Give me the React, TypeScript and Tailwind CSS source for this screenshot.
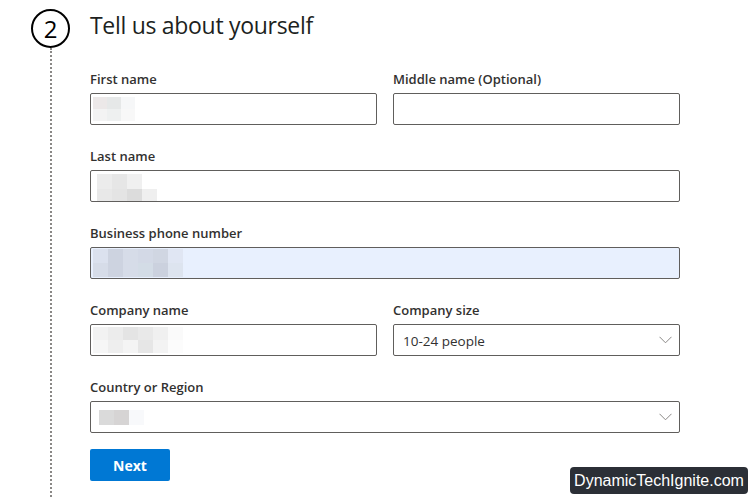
const font = { fontFamily: '"Open Sans", "Noto Sans", sans-serif' };

// pixelated blur stand-in for redacted values
const Mosaic = ({ cols, rows, cell, colors }: { cols: number; rows: number; cell: [number, number]; colors: string[] }) => (
  <div
    className="grid"
    style={{ gridTemplateColumns: `repeat(${cols}, ${cell[0]}px)`, gridTemplateRows: `repeat(${rows}, ${cell[1]}px)` }}
  >
    {colors.map((c, i) => (
      <div key={i} style={{ backgroundColor: c }} />
    ))}
  </div>
);

const Label = ({ children }: { children: React.ReactNode }) => (
  <div className="text-[13px] leading-[20px] font-semibold text-[#323130] mb-1">{children}</div>
);

const Box = ({ children, blue }: { children?: React.ReactNode; blue?: boolean }) => (
  <div
    className={`h-8 border border-[#605e5c] rounded-[2px] flex items-center overflow-hidden ${blue ? 'bg-[#e8f0fe]' : 'bg-white'}`}
  >
    {children}
  </div>
);

const Chevron = () => (
  <svg width="13" height="8" viewBox="0 0 13 8" fill="none" className="text-[#8a8886]">
    <path d="M0.5 0.8 L6.5 6.8 L12.5 0.8" stroke="currentColor" strokeWidth="1" />
  </svg>
);

const Select = ({ children }: { children?: React.ReactNode }) => (
  <div className="h-8 border border-[#605e5c] rounded-[2px] flex items-center justify-between bg-white pr-[7px]">
    <div className="flex items-center">{children}</div>
    <Chevron />
  </div>
);

export default function App() {
  return (
    <div className="relative w-[754px] h-[499px] bg-white overflow-hidden" style={font}>
      <div className="flex">
        <div className="w-[90px] pl-[31px] pt-[9px] shrink-0">
          <div className="w-[39px] flex flex-col items-center">
            <div className="w-[39px] h-[39px] rounded-full border-2 border-black flex items-center justify-center text-[24px] text-black leading-none">
              2
            </div>
            <div className="h-[460px] border-l-2 border-dotted border-[#8a8886]" />
          </div>
        </div>

        <div className="w-[590px] pt-[9px]">
          <h1 className="text-[23px] leading-[32px] tracking-[-0.3px] text-[#201f1e] mb-[28px]">Tell us about yourself</h1>

          <div className="flex flex-col gap-[21px]">
            <div className="grid grid-cols-2 gap-4">
              <div>
                <Label>First name</Label>
                <Box>
                  <div className="pl-[2px]">
                    <Mosaic cols={3} rows={2} cell={[14, 12]} colors={['#ece8e8', '#e6e8e8', '#f6f7f8', '#f3f3f3', '#eef0f0', '#f8f8f8']} />
                  </div>
                </Box>
              </div>
              <div>
                <Label>Middle name (Optional)</Label>
                <Box />
              </div>
            </div>

            <div>
              <Label>Last name</Label>
              <Box>
                <div className="pl-[6px] pt-[3px] self-start">
                  <Mosaic cols={4} rows={2} cell={[15, 15]} colors={['#ececec', '#e6e6e6', '#f0f0f0', '#ffffff', '#e8e8e8', '#e4e4e4', '#dcdcdc', '#efefef']} />
                </div>
              </Box>
            </div>

            <div>
              <Label>Business phone number</Label>
              <Box blue>
                <div className="pl-[2px]">
                  <Mosaic
                    cols={6}
                    rows={2}
                    cell={[15, 14]}
                    colors={['#dbe1ee', '#cdd3e0', '#d6dce8', '#d3d9e6', '#d0d6e2', '#e0e6f3', '#d6dce8', '#cdd3e0', '#d6dce8', '#d3dce6', '#cbd1de', '#dde4ef']}
                  />
                </div>
              </Box>
            </div>

            <div className="grid grid-cols-2 gap-4">
              <div>
                <Label>Company name</Label>
                <Box>
                  <div className="pl-[2px]">
                    <Mosaic
                      cols={6}
                      rows={2}
                      cell={[15, 13]}
                      colors={['#f2f2f2', '#ececec', '#e4e4e4', '#e9e9e9', '#f0f0f0', '#fafafa', '#f6f6f6', '#eeeeee', '#f4f4f4', '#e6e6e6', '#f3f3f3', '#fcfcfc']}
                    />
                  </div>
                </Box>
              </div>
              <div>
                <Label>Company size</Label>
                <Select>
                  <span className="pl-[9px] text-[13.5px] text-[#323130] leading-[20px] pt-[1px]">10-24 people</span>
                </Select>
              </div>
            </div>

            <div>
              <Label>Country or Region</Label>
              <Select>
                <div className="pl-[8px]">
                  <Mosaic cols={3} rows={1} cell={[15, 15]} colors={['#dadada', '#d6d4d4', '#f8f9fb']} />
                </div>
              </Select>
            </div>
          </div>

          <button className="mt-4 w-20 h-8 bg-[#0078d4] rounded-[2px] text-white text-[14px] font-bold">Next</button>
        </div>
      </div>

      <div
        className="absolute left-[570px] top-[467px] w-[178px] h-[27px] bg-[#2b2f36] rounded-[4px] flex items-center justify-center text-white text-[16px]"
        style={{ fontFamily: '"Liberation Sans", Arial, sans-serif' }}
      >
        DynamicTechIgnite.com
      </div>
    </div>
  );
}
